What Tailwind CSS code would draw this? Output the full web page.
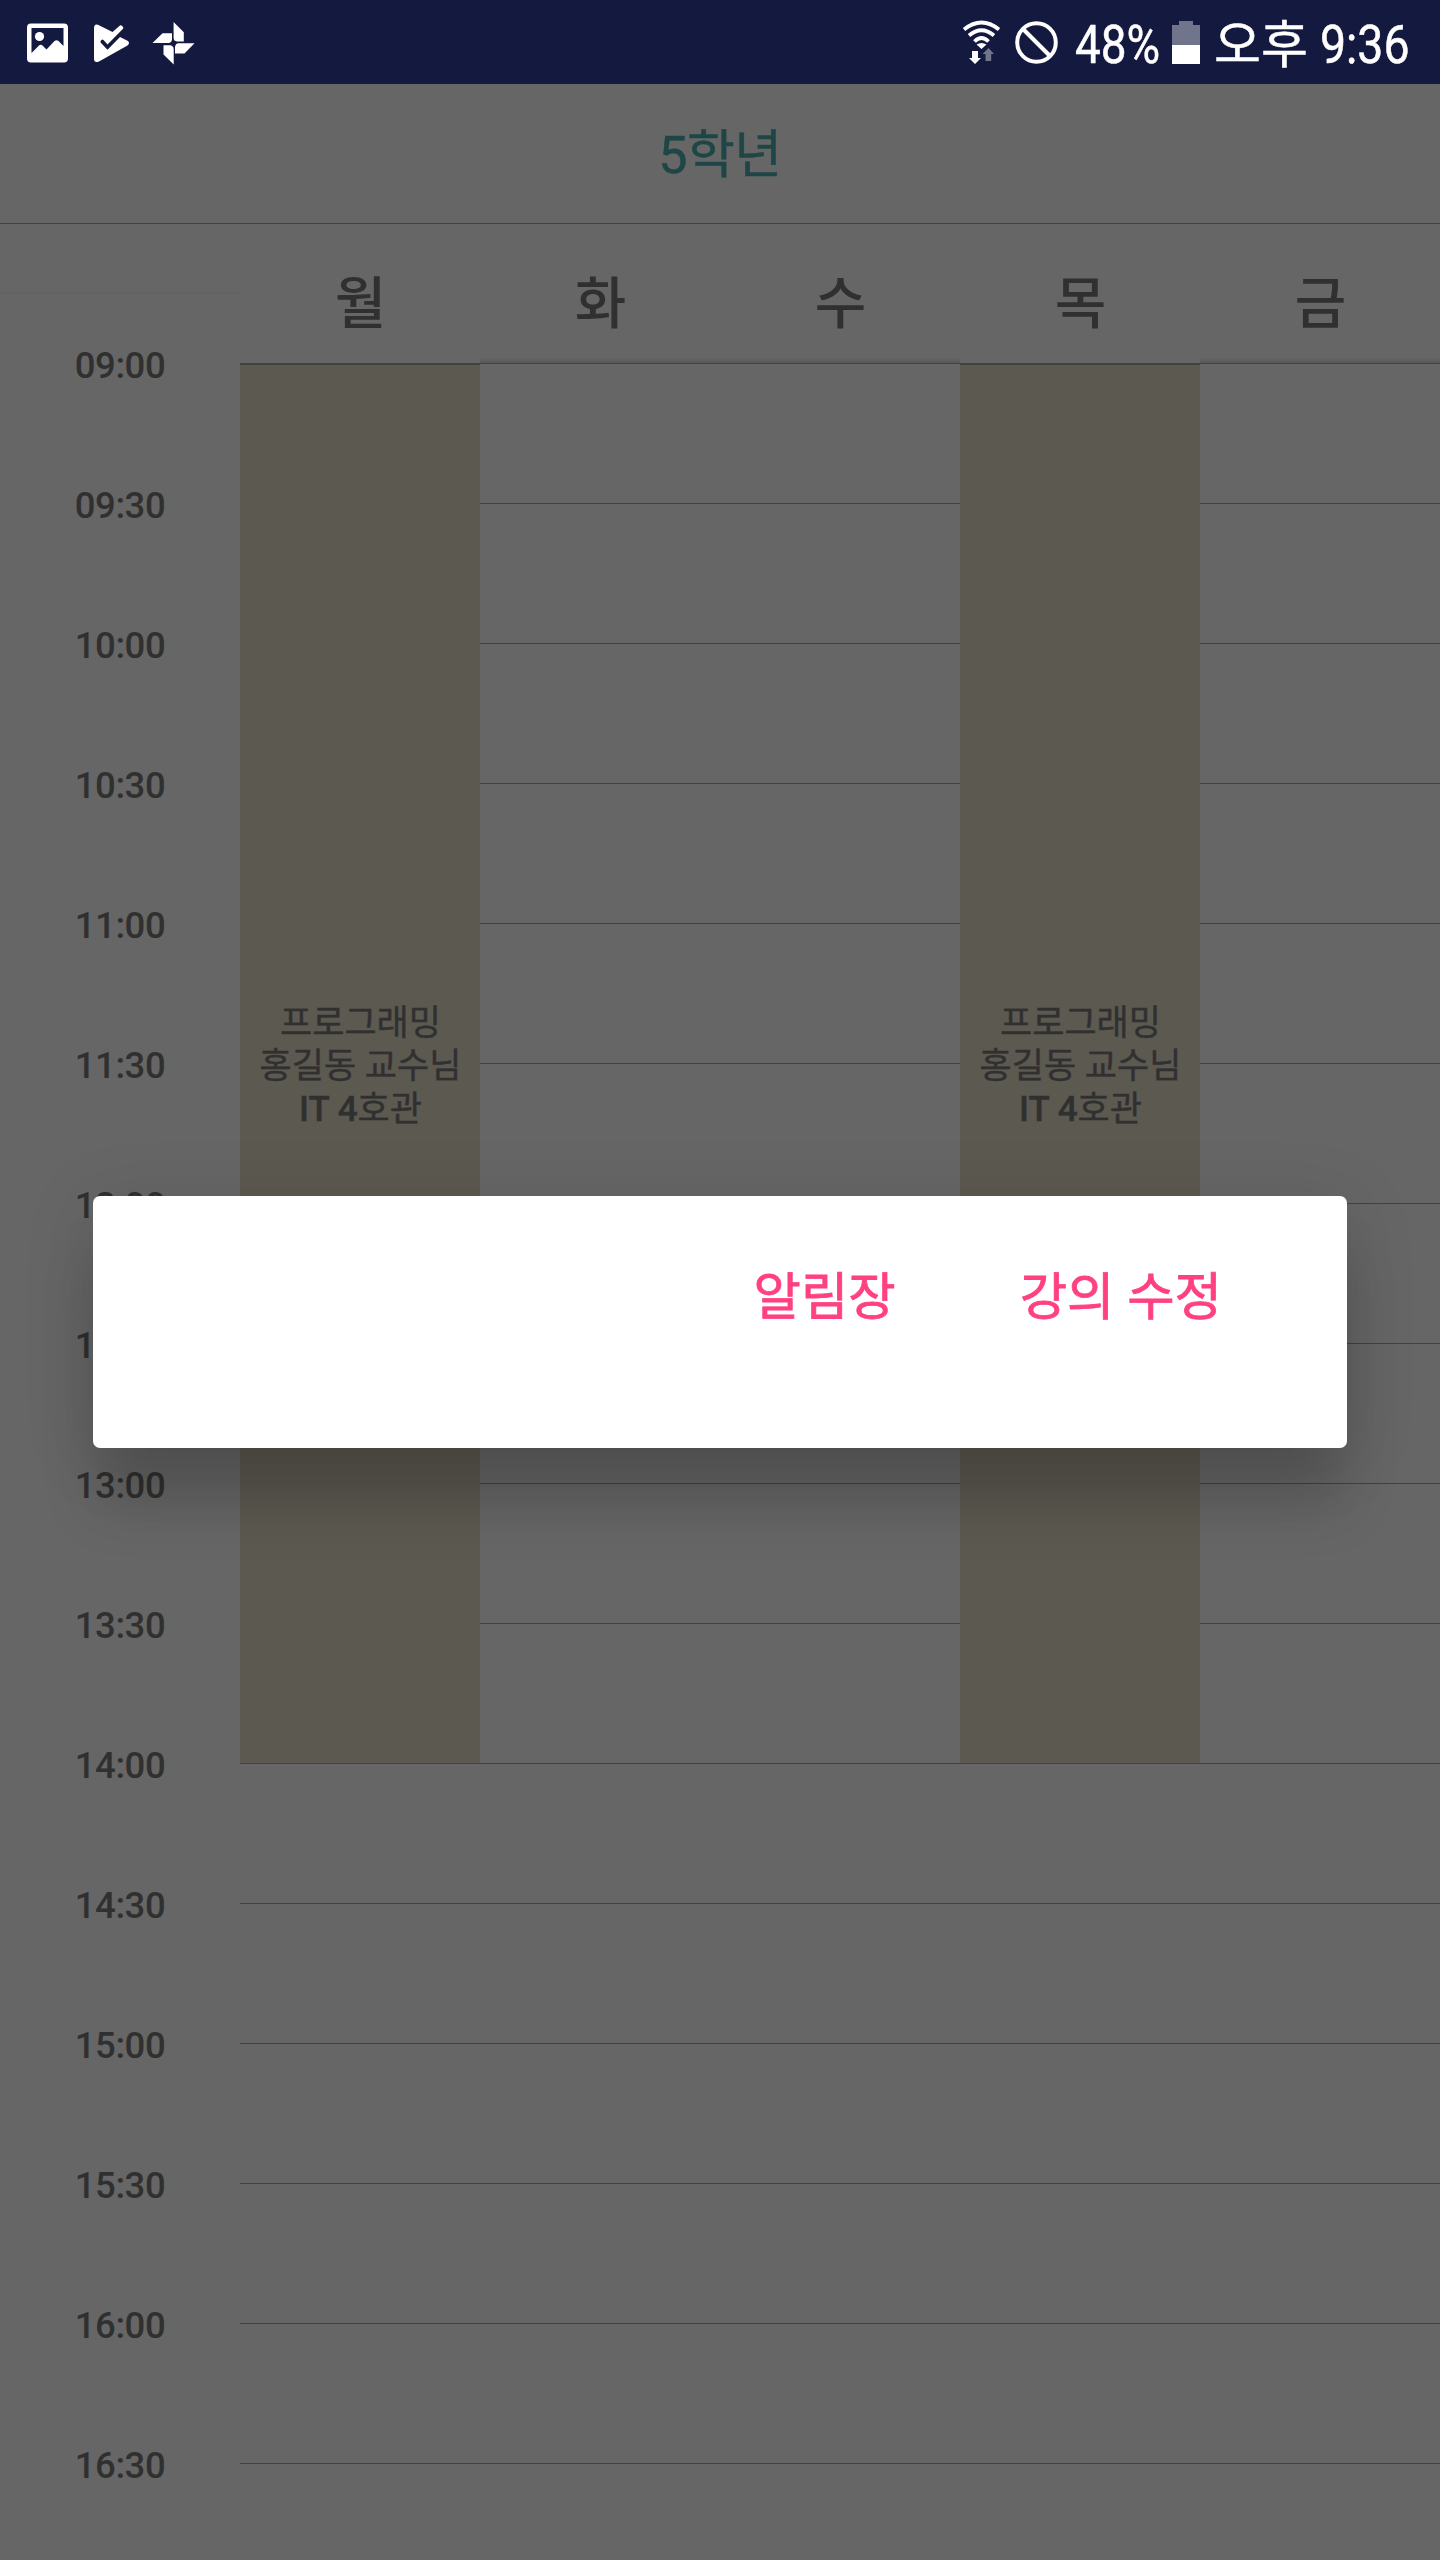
<!DOCTYPE html>
<html lang="ko">
<head>
<meta charset="utf-8">
<title>5학년</title>
<script src="https://cdn.jsdelivr.net/npm/@tailwindcss/browser@4"></script>
</head>
<body class="relative h-[2560px] w-[1440px] overflow-hidden bg-[#666666] font-['Roboto','Noto_Sans_CJK_KR',sans-serif] text-[#303030]">
<!-- status bar -->
<header class="flex h-[84px] items-center justify-between bg-[#13193f] pl-[26px] pr-8 text-white">
  <div class="flex h-full items-center">
    <svg class="h-[84px] w-[200px]" viewBox="26 0 200 84" fill="#fff">
      <path fill-rule="evenodd" d="M31 23.500H64Q68 23.500 68 27.500V58.500Q68 62.500 64 62.500H31Q27 62.500 27 58.500V27.500Q27 23.500 31 23.500ZM31.500 28V53L39 45.500Q41 44 43 46L46.500 49.500L54.500 41Q56.500 39.500 58.500 41L63.500 46V28Z"/>
      <circle cx="39.500" cy="36.500" r="4.600"/>
      <path d="M98 24.800L112.500 32L120 25.500Q121 24.800 122 25.800L123 27Q123.700 28 122.800 29L107.500 44.500L103.500 40Q102.500 39 101.500 40L100.800 40.800Q100 41.800 100.800 42.800L107.500 49.800L120 37L127.500 40.800Q130.500 43 127.500 45.500L99 61.500Q94 63.500 94 58.500V28.500Q94 23.500 98 24.800Z"/>
      <path d="M173.600 22L183.800 32.200V41.500H177Q173.600 41 173.600 38ZM194.500 43.300L184.500 53.600H175V47Q175.500 43.600 178.500 43.300ZM173.700 64.500L163.500 54.500V45.300H170.300Q173.500 46 173.700 49ZM152.500 43L162.500 33.300H172V39.500Q171.500 42.800 168.500 43Z"/>
    </svg>
  </div>
  <div class="flex h-full items-center">
    <svg class="h-[84px] w-[106px]" viewBox="960 0 106 84" fill="none" stroke="#fff">
      <g stroke-width="3.800"><path d="M964 29.500Q981.500 15.500 999 29.500M969 35.500Q981.500 25 994 35.500M974.500 41.500Q981.500 34.500 988.500 41.500"/></g>
      <path fill="#fff" stroke="none" d="M981.500 49L976.500 44.500Q981.500 41.500 986.500 44.500ZM972 51H978V58H981L975 64L969 58H972Z"/>
      <path fill="#71758c" stroke="none" d="M988.500 48L994 54H991.200V61H985.500V54H982.500Z"/>
      <circle cx="1036.500" cy="42.500" r="19.300" stroke-width="4"/><path stroke-width="4" d="M1023 29L1050 56"/>
    </svg>
    <div class="flex h-[84px] w-[106px] items-center pl-[9px]"><span class="inline-block origin-left scale-x-[.85] pt-[5px] text-[54px] leading-none [-webkit-text-stroke:.5px_#fff]">48%</span></div>
    <svg class="h-[84px] w-[38px]" viewBox="1172 0 38 84"><path fill="#71758c" d="M1179 21H1193V25H1200V45H1172V25H1179Z"/><path fill="#fff" d="M1172 45H1200V64H1172Z"/></svg>
    <div class="flex h-[84px] w-[110px] items-center pl-[4px]"><span class="pt-[6px] text-[51px] leading-none [-webkit-text-stroke:.5px_#fff]">오후</span></div>
    <div class="flex h-[84px] w-[88px] items-center"><span class="inline-block origin-left scale-x-[.86] pt-[5px] text-[54px] leading-none [-webkit-text-stroke:.5px_#fff]">9:36</span></div>
  </div>
</header>

<!-- title -->
<h1 class="flex h-[140px] items-center justify-center border-b border-[#424242] pt-[5px] text-[52px] leading-[60px] tracking-[-0.5px] text-[#1f4646] [-webkit-text-stroke:.5px_#1f4646]">5학년</h1>

<!-- timetable -->
<main class="flex h-[2336px] overflow-hidden">
  <section class="w-[240px] shrink-0 text-center text-[36.5px] font-medium leading-[143px] tracking-[-0.4px]">
    <div class="h-[70px] bg-linear-to-t from-[#626262] to-[#666666] to-[4px]"></div>
    <div id="times"></div>
  </section>
  <section class="w-[1200px]">
    <div id="days" class="grid h-[140px] grid-cols-5 border-b border-[#424242] text-center text-[56px] font-medium leading-[140px]"></div>
    <div id="grid" class="grid grid-cols-5"></div>
  </section>
</main>

<!-- dialog -->
<div class="absolute left-[93px] top-[1196px] flex h-[252px] w-[1254px] justify-end rounded-[7px] bg-white pr-[125px] pt-[72px] text-[51.5px] leading-[60px] text-[#ff4081] shadow-[0_60px_56px_-4px_rgba(0,0,0,.17),0_10px_70px_4px_rgba(0,0,0,.1)] [-webkit-text-stroke:.8px_#ff4081]">
  <span>알림장</span><span class="ml-[124px]">강의 수정</span>
</div>

<script>
const times = [];
for (let m = 540; m <= 990; m += 30) times.push(String(Math.floor(m / 60)).padStart(2, '0') + ':' + String(m % 60).padStart(2, '0'));
document.getElementById('times').innerHTML = times.map(t => `<div class="h-[140px]">${t}</div>`).join('');
const busy = [0, 3];
document.getElementById('days').innerHTML = ['월', '화', '수', '목', '금'].map((d, i) =>
  `<div class="h-[139px] pt-[10px] pl-px ${busy.includes(i) ? '' : 'bg-linear-to-t from-[#595959] to-[#666666] to-[6px]'}">${d}</div>`).join('');
const slot = '<div class="h-[140px] border-b border-[#424242]"></div>';
const lecture = '<div class="flex h-[1400px] items-center justify-center border-b border-t border-b-[#424242] border-t-[#424242] bg-[#5c5950] pt-[4px] pl-px text-center text-[35px] leading-[43px] [-webkit-text-stroke:.4px_#303030]"><p>프로그래밍<br>홍길동 교수님<br><span class="font-medium">IT 4</span>호관</p></div>';
document.getElementById('grid').innerHTML = [0, 1, 2, 3, 4].map(i =>
  `<div>${busy.includes(i) ? lecture + slot.repeat(6) : slot.repeat(16)}</div>`).join('');
</script>
</body>
</html>
